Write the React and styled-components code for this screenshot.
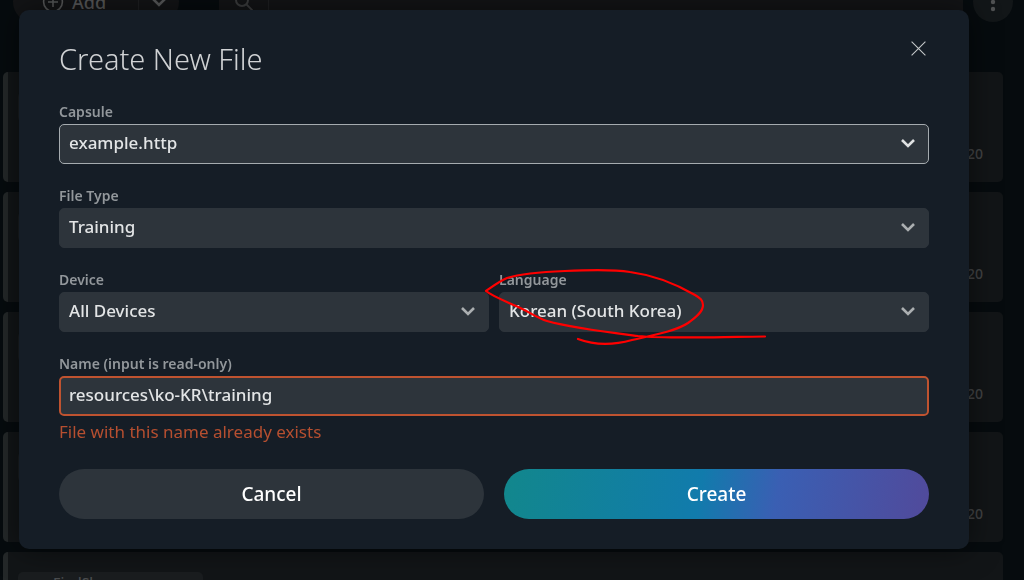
import React from "react";
import styled, { createGlobalStyle } from "styled-components";

const GlobalStyle = createGlobalStyle`
  * { box-sizing: border-box; }
  html, body { margin: 0; height: 100%; overflow: hidden; }
  body {
    background: #060b0e;
    font-family: "Noto Sans", "Open Sans", sans-serif;
    color: #dcdedf;
  }
  #root { height: 100%; }
  button, input, select { font-family: inherit; }
`;

const Page = styled.div`
  height: 100vh;
  overflow: hidden;
`;

const Toolbar = styled.header`
  display: flex;
  align-items: flex-end;
  height: 22px;
  padding: 0 11px 0 13px;
`;

const AddGroup = styled.div`
  display: flex;
  flex: none;
  width: 166px;
  height: 40px;
  margin-right: 40px;
  border-radius: 20px;
  overflow: hidden;
  background: #131416;
`;

const AddButton = styled.button`
  display: flex;
  align-items: center;
  gap: 8px;
  flex: 1;
  padding: 0 0 0 29px;
  border: 0;
  background: none;
  color: #575859;
  font-size: 18px;
  font-weight: 500;
`;

const AddMore = styled.button`
  display: flex;
  align-items: center;
  justify-content: center;
  width: 41px;
  padding: 0;
  border: 0;
  border-left: 1px solid #1e1f21;
  background: none;
  color: #575859;
`;

const SearchBox = styled.label`
  display: flex;
  flex: 1;
  height: 40px;
  margin-right: 10px;
  background: #131416;
  color: #3b3c3d;
`;

const SearchIcon = styled.span`
  display: flex;
  align-items: center;
  justify-content: center;
  width: 50px;
  border-right: 1px solid #1e1f21;
`;

const SearchInput = styled.input`
  flex: 1;
  border: 0;
  background: none;
  color: #4c4d4e;
`;

const MenuButton = styled.button`
  flex: none;
  width: 40px;
  height: 40px;
  padding: 0;
  border: 0;
  border-radius: 50%;
  background: #121618;
  color: #4f5152;
`;

const CardList = styled.main`
  display: flex;
  flex-direction: column;
  gap: 10px;
  padding: 50px 21px 0 3px;
`;

const Card = styled.article`
  display: flex;
  align-items: flex-start;
  justify-content: space-between;
  height: 110px;
  padding: 20px 20px 18px 10px;
  border-left: 5px solid #242829;
  border-radius: 5px;
  background: #121517;
`;

const Tag = styled.span`
  width: 185px;
  height: 30px;
  padding-left: 35px;
  border-radius: 5px;
  background: #1a1d1f;
  color: #4b4d4f;
  font-size: 14px;
  font-weight: 500;
  line-height: 22px;
`;

const Stamp = styled.span`
  align-self: flex-end;
  color: #434445;
  font-size: 14px;
  font-weight: 500;
  line-height: 20px;
`;

const Overlay = styled.div`
  position: fixed;
  inset: 0;
  padding: 10px 55px 0 19px;
`;

const Dialog = styled.form`
  padding: 30px 40px;
  border-radius: 10px;
  background: #151d26;
  box-shadow: 0 0 30px rgba(0, 0, 0, 0.5);
`;

const DialogHeader = styled.div`
  display: flex;
  align-items: flex-start;
  justify-content: space-between;
  margin-bottom: 22px;
`;

const Title = styled.h1`
  margin: 0;
  color: #d0d2d4;
  font-size: 29px;
  font-weight: 350;
  line-height: 38px;
`;

const CloseButton = styled.button`
  display: flex;
  padding: 0 3px;
  border: 0;
  background: none;
  color: #c4c7c9;
`;

const FieldRow = styled.div`
  display: flex;
  gap: 10px;
`;

const Field = styled.div`
  flex: 1;
  min-width: 0;
  margin-bottom: ${(p) => (p.$tight ? 4 : 20)}px;
`;

const Label = styled.label`
  display: block;
  padding: 2px 0;
  color: #92979b;
  font-size: 14px;
  font-weight: 600;
  line-height: 20px;
`;

const Control = styled.div`
  display: grid;
  align-items: center;
  color: ${(p) => (p.$focused ? "#dfe1e2" : "#abafb1")};
  > * { grid-area: 1 / 1; }
  > svg { justify-self: end; margin: 0 13px 2px 0; pointer-events: none; }
`;

const boxStyle = `
  width: 100%;
  height: 40px;
  margin: 0;
  border-radius: 5px;
  outline: 0;
  background: #2d343b;
  color: #e3e5e6;
  font-size: 17px;
  font-weight: 500;
`;

const Select = styled.select`
  ${boxStyle}
  appearance: none;
  padding: 0 40px 3px 9px;
  border: 1px solid ${(p) => (p.$focused ? "#a5abaf" : "#2d343b")};
`;

const NameInput = styled.input`
  ${boxStyle}
  display: block;
  padding: 0 8px 3px;
  border: 2px solid #bf5330;
`;

const ErrorText = styled.p`
  margin: 0 0 25px;
  color: #b64f30;
  font-size: 17px;
  line-height: 24px;
`;

const Actions = styled.div`
  display: flex;
  gap: 20px;
`;

const ActionButton = styled.button`
  flex: 1;
  height: 50px;
  padding: 0;
  border: 0;
  border-radius: 25px;
  background: ${(p) =>
    p.$primary
      ? "linear-gradient(100deg, #12878c 0%, #117bac 46%, #3a5fb3 64%, #514a9b 100%)"
      : "#2d343b"};
  color: #fff;
  font-size: 19px;
  font-weight: 500;
`;

const Scribble = styled.svg`
  position: absolute;
  left: 480px;
  top: 255px;
  pointer-events: none;
`;

const Chevron = () => (
  <svg width="16" height="10" viewBox="0 0 16 10" fill="none" stroke="currentColor" strokeWidth="2.6" aria-hidden="true">
    <path d="M2 2 8 8 14 2" />
  </svg>
);

function SelectField({ id, label, value, focused }) {
  return (
    <Field>
      <Label htmlFor={id}>{label}</Label>
      <Control $focused={focused}>
        <Select id={id} defaultValue={value} $focused={focused}>
          <option>{value}</option>
        </Select>
        <Chevron />
      </Control>
    </Field>
  );
}

export default function App() {
  return (
    <>
      <GlobalStyle />
      <Page>
        <Toolbar>
          <AddGroup>
            <AddButton type="button">
              <svg width="22" height="22" viewBox="0 0 22 22" fill="none" stroke="currentColor" strokeWidth="1.6" aria-hidden="true">
                <circle cx="11" cy="11" r="9.4" />
                <path d="M11 6v10M6 11h10" />
              </svg>
              Add
            </AddButton>
            <AddMore type="button" aria-label="More add options">
              <Chevron />
            </AddMore>
          </AddGroup>
          <SearchBox>
            <SearchIcon>
              <svg width="20" height="20" viewBox="0 0 20 20" fill="none" stroke="currentColor" strokeWidth="2" aria-hidden="true">
                <circle cx="8" cy="8" r="6" />
                <path d="m12.4 12.4 6 6" />
              </svg>
            </SearchIcon>
            <SearchInput aria-label="Search" />
          </SearchBox>
          <MenuButton type="button" aria-label="Menu">
            <svg width="40" height="40" viewBox="0 0 40 40" fill="currentColor" aria-hidden="true">
              <circle cx="20" cy="13" r="2.2" />
              <circle cx="20" cy="20" r="2.2" />
              <circle cx="20" cy="27" r="2.2" />
            </svg>
          </MenuButton>
        </Toolbar>
        <CardList>
          {[1, 2, 3, 4, 5].map((n) => (
            <Card key={n}>
              <Tag>{n === 5 ? "FindShoe" : ""}</Tag>
              {n < 5 && <Stamp>20</Stamp>}
            </Card>
          ))}
        </CardList>
      </Page>
      <Overlay>
        <Dialog role="dialog" aria-labelledby="dialog-title" onSubmit={(e) => e.preventDefault()}>
          <DialogHeader>
            <Title id="dialog-title">Create New File</Title>
            <CloseButton type="button" aria-label="Close">
              <svg width="15" height="17" viewBox="0 0 15 17" fill="none" stroke="currentColor" strokeWidth="1.1" aria-hidden="true">
                <path d="M.6 1.6 14.4 15.4M14.4 1.6.6 15.4" />
              </svg>
            </CloseButton>
          </DialogHeader>
          <SelectField id="capsule" label="Capsule" value="example.http" focused />
          <SelectField id="type" label="File Type" value="Training" />
          <FieldRow>
            <SelectField id="device" label="Device" value="All Devices" />
            <SelectField id="language" label="Language" value="Korean (South Korea)" />
          </FieldRow>
          <Field $tight>
            <Label htmlFor="name">Name (input is read-only)</Label>
            <NameInput id="name" readOnly value={"resources\\ko-KR\\training"} />
          </Field>
          <ErrorText>File with this name already exists</ErrorText>
          <Actions>
            <ActionButton type="button">Cancel</ActionButton>
            <ActionButton type="submit" $primary>Create</ActionButton>
          </Actions>
        </Dialog>
        <Scribble width="300" height="100" viewBox="0 0 300 100" fill="none" stroke="#ff0000" strokeWidth="2.2" strokeLinecap="round" strokeLinejoin="round" aria-hidden="true">
          <path d="M98 84C114 90 134 90 152 85C174 80 196 76 208 68C218 61 223 56 223 50C223 45 220 43 215 40C196 29 173 20 150 17C132 14 105 15 85 16C60 17 40 19 27 23C18 27 12 32 6 36C12 41 25 46 36 51C48 56 57 63 67 66C92 73 126 77 158 81C190 84 230 82 285 81.500" />
        </Scribble>
      </Overlay>
    </>
  );
}
